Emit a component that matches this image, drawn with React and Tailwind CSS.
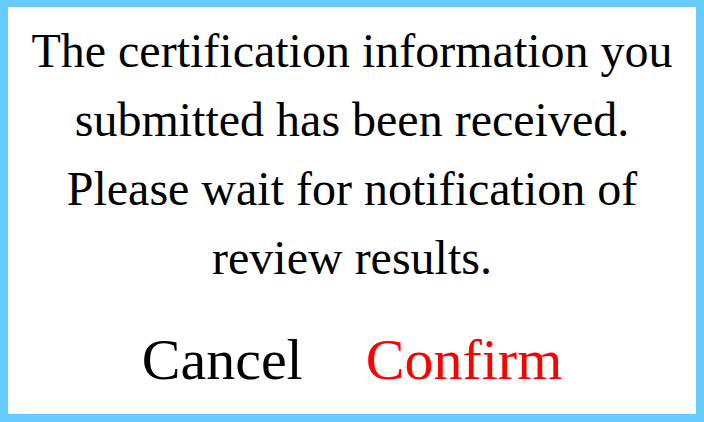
export default function App() {
  return (
    <div
      className="w-[704px] h-[422px] bg-white border-[8px] border-t-[7px] border-[#66ccff] flex flex-col items-center"
      style={{ fontFamily: '"Liberation Serif", "Times New Roman", serif' }}
    >
      <p className="mt-[9px] text-center text-black text-[48px] leading-[69px] whitespace-nowrap">
        The certification information you
        <br />
        submitted has been received.
        <br />
        Please wait for notification of
        <br />
        review results.
      </p>
      <div className="mt-[39px] flex items-center gap-[63px] text-[58px] leading-none">
        <button type="button" className="text-black">
          Cancel
        </button>
        <button type="button" className="text-[#ff0000]">
          Confirm
        </button>
      </div>
    </div>
  )
}
